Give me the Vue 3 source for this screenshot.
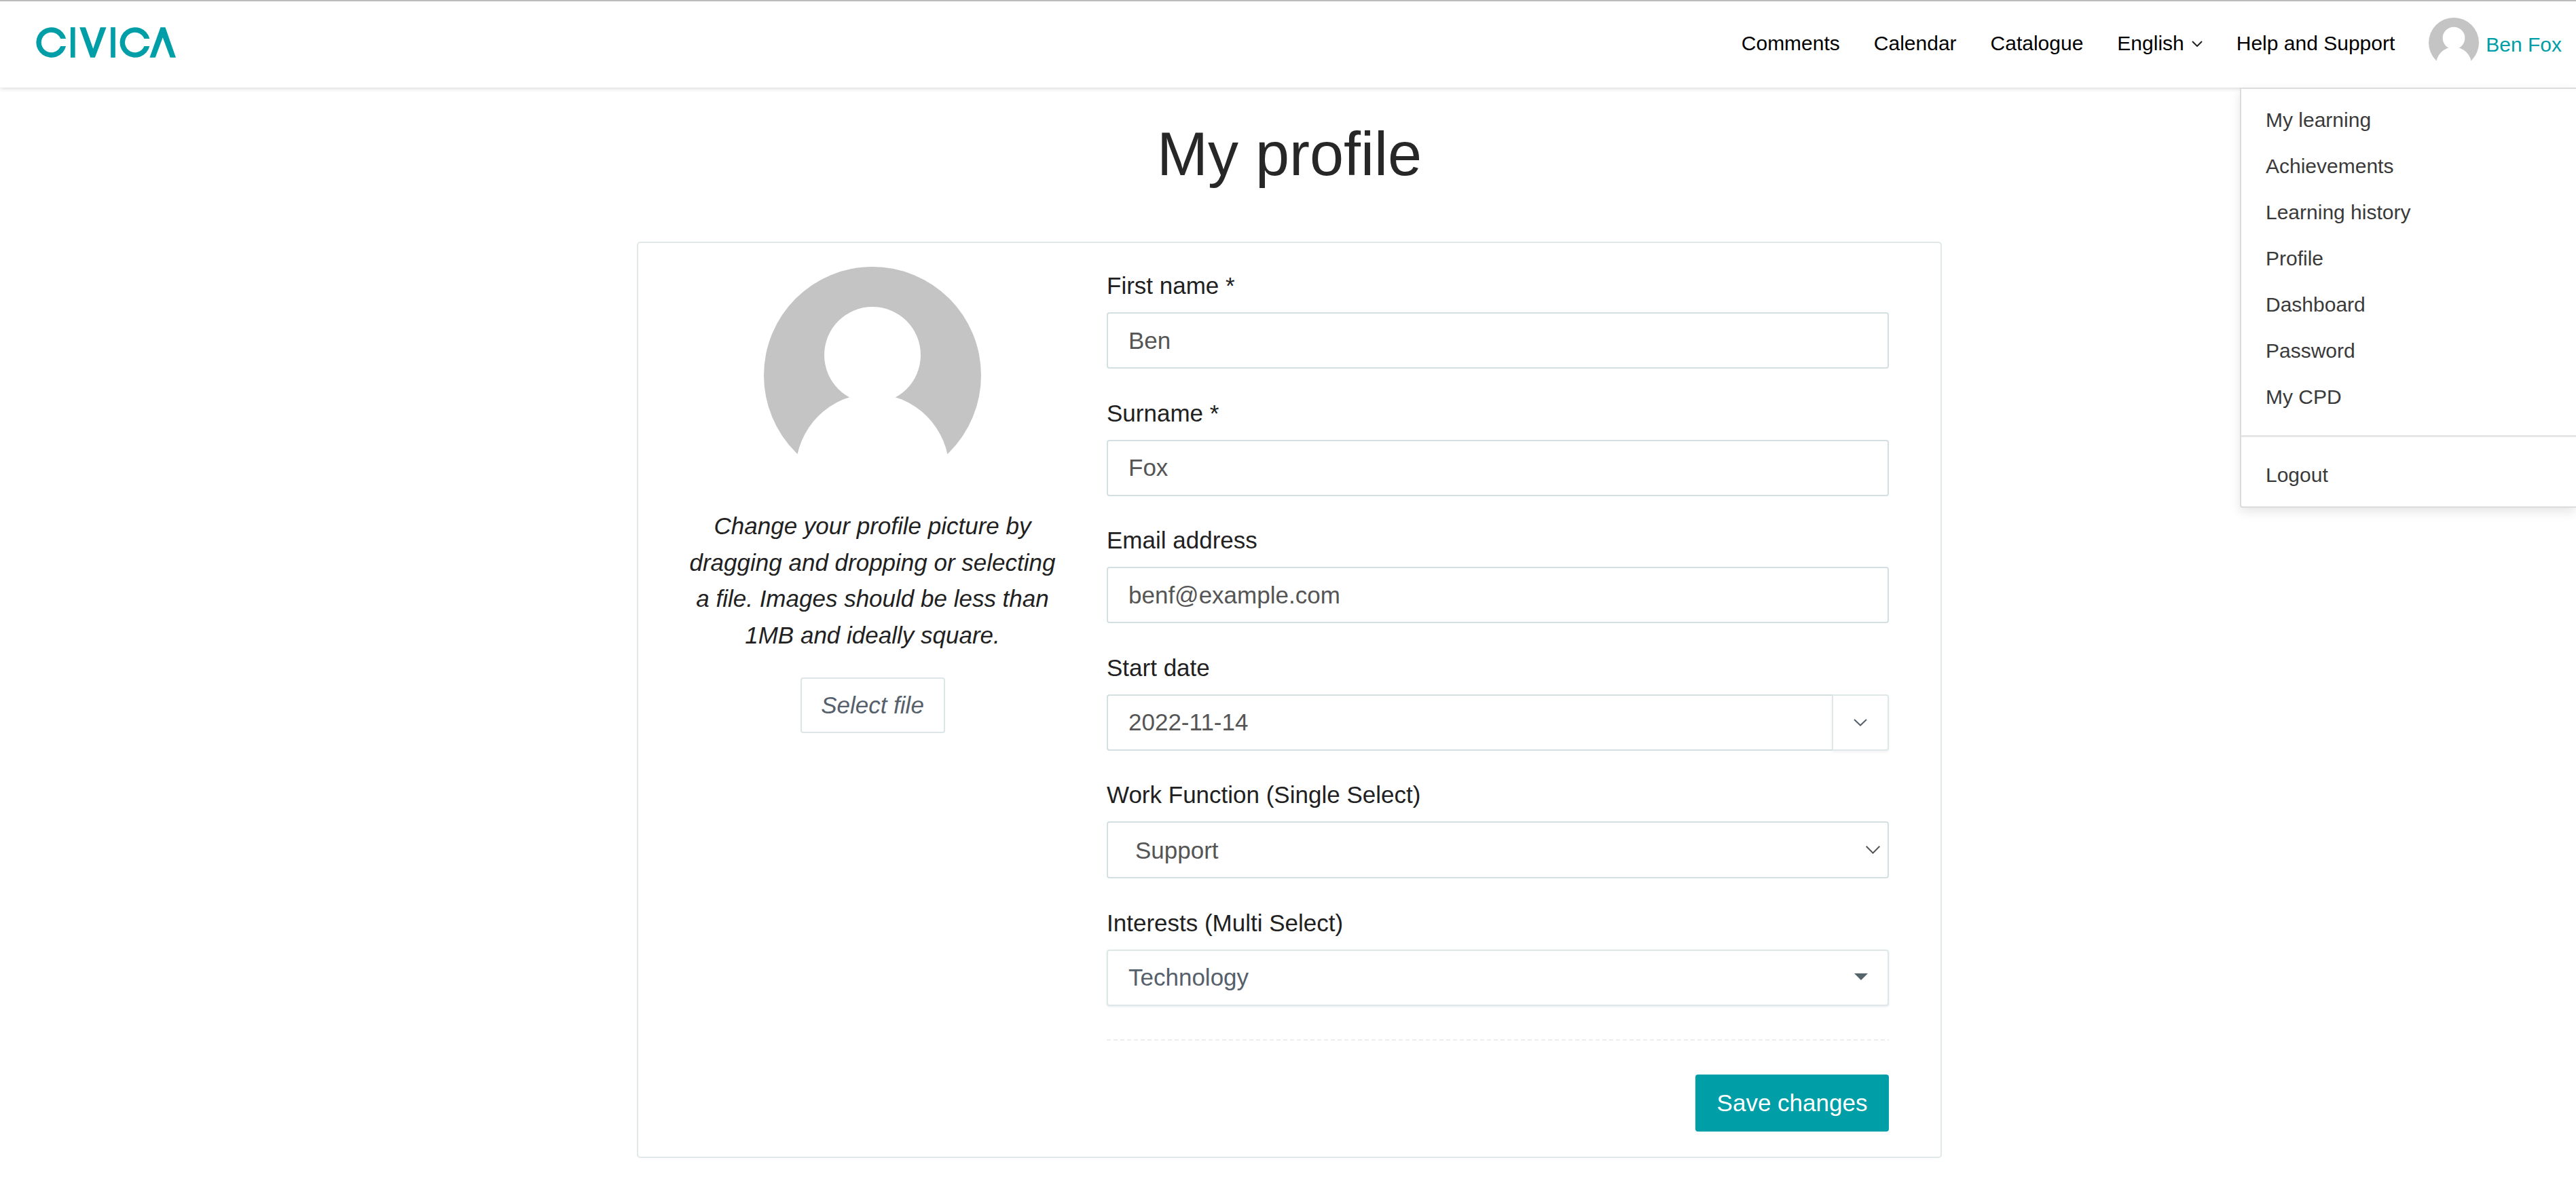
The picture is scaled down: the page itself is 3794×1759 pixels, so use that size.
<script setup>
import { ref } from 'vue'

const navLinks = ['Comments', 'Calendar', 'Catalogue']
const menuItems = ['My learning', 'Achievements', 'Learning history', 'Profile', 'Dashboard', 'Password', 'My CPD']
const firstName = ref('Ben')
const surname = ref('Fox')
const email = ref('benf@example.com')
const startDate = ref('2022-11-14')
const workFunction = ref('Support')
</script>

<template>
  <div class="page">
    <header class="topbar">
      <svg class="logo" viewBox="0 0 206.3 44.7" role="img" aria-label="Civica">
        <path d="M44.2 16.75A22.3 22.3 0 1 0 44.2 27.95H36.3A14.8 14.8 0 1 1 36.3 16.75Z" />
        <rect x="51" y="0" width="6.7" height="44.7" />
        <path d="M64.3 0H73L84.3 31.7L95 0H103.7L87 44.7H80.3Z" />
        <rect x="110.3" y="0" width="6.7" height="44.7" />
        <path d="M167.6 16.75A22.3 22.3 0 1 0 167.6 27.95H159.7A14.8 14.8 0 1 1 159.7 16.75Z" />
        <path d="M167.7 44.7H176L187 15L198 44.7H206.3L190.7 0H183.7Z" />
      </svg>
      <nav class="nav">
        <a v-for="link in navLinks" :key="link" class="nav-link">{{ link }}</a>
        <a class="nav-link lang">
          English
          <svg class="lang-chevron" viewBox="0 0 16 9"><path d="M1 1L8 8L15 1" /></svg>
        </a>
        <a class="nav-link">Help and Support</a>
        <a class="user">
          <svg class="avatar-small" viewBox="0 0 320 277">
            <circle cx="160" cy="160" r="160" fill="#c4c4c4" />
            <circle cx="160" cy="130" r="71" fill="#fff" />
            <circle cx="160" cy="300" r="113" fill="#fff" />
          </svg>
          <span class="user-name">Ben Fox</span>
        </a>
      </nav>
    </header>

    <ul class="user-menu">
      <li v-for="item in menuItems" :key="item" class="menu-item">{{ item }}</li>
      <li class="menu-divider"></li>
      <li class="menu-item">Logout</li>
    </ul>

    <main class="content">
      <h1 class="title">My profile</h1>
      <section class="card">
        <div class="picture-col">
          <svg class="avatar" viewBox="0 0 320 277">
            <circle cx="160" cy="160" r="160" fill="#c4c4c4" />
            <circle cx="160" cy="130" r="71" fill="#fff" />
            <circle cx="160" cy="300" r="113" fill="#fff" />
          </svg>
          <p class="picture-help">Change your profile picture by dragging and dropping or selecting a file. Images should be less than 1MB and ideally square.</p>
          <button class="file-btn" type="button">Select file</button>
        </div>

        <form class="form-col" @submit.prevent>
          <div class="field">
            <label class="label">First name *</label>
            <input v-model="firstName" class="control" type="text" />
          </div>
          <div class="field">
            <label class="label">Surname *</label>
            <input v-model="surname" class="control" type="text" />
          </div>
          <div class="field">
            <label class="label">Email address</label>
            <input v-model="email" class="control" type="text" />
          </div>
          <div class="field">
            <label class="label">Start date</label>
            <div class="date-group">
              <input v-model="startDate" class="control date-input" type="text" />
              <div class="date-addon">
                <svg class="date-chevron" viewBox="0 0 20 11"><path d="M1 1L10 9.5L19 1" /></svg>
              </div>
            </div>
          </div>
          <div class="field">
            <label class="label">Work Function (Single Select)</label>
            <div class="select-wrap">
              <select v-model="workFunction" class="control select">
                <option>Support</option>
              </select>
              <svg class="select-chevron" viewBox="0 0 21 12"><path d="M0.7 0.7L10.5 10.7L20.3 0.7" /></svg>
            </div>
          </div>
          <div class="field">
            <label class="label">Interests (Multi Select)</label>
            <div class="control multi">
              <span>Technology</span>
              <span class="multi-caret"></span>
            </div>
          </div>
          <div class="dash-rule"></div>
          <div class="actions">
            <button class="save-btn" type="submit">Save changes</button>
          </div>
        </form>
      </section>
    </main>
  </div>
</template>

<style>
html, body {
  margin: 0;
  background: #fff;
}
</style>

<style scoped>
.page {
  position: relative;
  min-height: 1759px;
  font-family: "Liberation Sans", Arial, sans-serif;
  color: #212121;
  background: #fff;
  overflow: hidden;
}

.topbar {
  display: flex;
  justify-content: space-between;
  align-items: flex-start;
  box-sizing: border-box;
  height: 129px;
  padding: 24px 21px 0 53px;
  border-top: 2px solid #bcbcbc;
  background: #fff;
  box-shadow: 0 2px 6px rgba(0, 0, 0, 0.14);
}

.logo {
  width: 206px;
  height: 45px;
  margin-top: 14px;
  fill: #009ea7;
}

.nav {
  display: flex;
  align-items: flex-start;
  gap: 50px;
}

.nav-link {
  margin-top: 18px;
  font-size: 30px;
  line-height: 40px;
  color: #000;
}

.lang {
  display: flex;
  align-items: center;
  gap: 11px;
}

.lang-chevron {
  width: 16px;
  height: 9px;
  fill: none;
  stroke: #222;
  stroke-width: 2;
}

.user {
  display: flex;
  align-items: flex-start;
  gap: 10px;
}

.avatar-small {
  display: block;
  width: 74px;
  height: 64px;
}

.user-name {
  margin-top: 20px;
  font-size: 30px;
  line-height: 40px;
  color: #009ea7;
}

.user-menu {
  position: absolute;
  top: 129px;
  right: 0;
  box-sizing: border-box;
  width: 495px;
  margin: 0;
  padding: 12px 0 12px;
  list-style: none;
  background: #fff;
  border: 2px solid #dcdcdc;
  border-right: 0;
  border-radius: 0 0 0 4px;
  box-shadow: 0 6px 16px rgba(0, 0, 0, 0.1);
  z-index: 2;
}

.menu-item {
  padding-left: 36px;
  font-size: 30px;
  line-height: 68px;
  color: #3a3a3a;
}

.menu-divider {
  height: 3px;
  margin: 22px 0 22px;
  background: #e6e6e6;
}

.content {
  display: flex;
  flex-direction: column;
  align-items: center;
  padding-left: 4px;
}

.title {
  margin: 44px 0 75px;
  font-size: 90px;
  font-weight: 400;
  line-height: 108px;
  color: #272727;
}

.card {
  display: grid;
  grid-template-columns: 690px 1fr;
  box-sizing: border-box;
  width: 1922px;
  height: 1350px;
  padding: 0 76px 0 0;
  border: 2px solid #e1e8e9;
  border-radius: 5px;
}

.picture-col {
  display: flex;
  flex-direction: column;
  align-items: center;
  padding-top: 35px;
}

.avatar {
  display: block;
  width: 320px;
  height: 277px;
  flex: none;
}

.picture-help {
  width: 556px;
  margin: 78px 0 36px;
  font-size: 35px;
  font-style: italic;
  line-height: 53.5px;
  text-align: center;
  color: #212121;
}

.file-btn {
  width: 213px;
  height: 82px;
  padding: 0;
  font-family: inherit;
  font-size: 35px;
  font-style: italic;
  color: #55606b;
  background: #fff;
  border: 2px solid #dde5e7;
  border-radius: 4px;
}

.form-col {
  display: flex;
  flex-direction: column;
  padding-top: 43px;
}

.field {
  margin-bottom: 45.5px;
}

.label {
  display: block;
  margin-bottom: 19px;
  font-size: 35px;
  line-height: 40px;
  color: #212121;
}

.control {
  display: block;
  box-sizing: border-box;
  width: 100%;
  height: 83px;
  margin: 0;
  padding: 0 30px;
  font-family: inherit;
  font-size: 35px;
  color: #555;
  background: #fff;
  border: 2px solid #d3dfe0;
  border-radius: 4px;
  outline: none;
}

.date-group {
  display: flex;
}

.date-input {
  flex: 1;
  border-right: 0;
  border-radius: 4px 0 0 4px;
}

.date-addon {
  display: flex;
  align-items: center;
  justify-content: center;
  flex: none;
  box-sizing: border-box;
  width: 84px;
  height: 83px;
  border: 2px solid #dfe7e8;
  border-radius: 0 4px 4px 0;
  box-shadow: 0 2px 4px rgba(0, 0, 0, 0.06);
}

.date-chevron {
  width: 20px;
  height: 11px;
  fill: none;
  stroke: #55606b;
  stroke-width: 2;
}

.select-wrap {
  position: relative;
}

.select {
  height: 84px;
  padding-left: 40px;
  appearance: none;
}

.select-chevron {
  position: absolute;
  top: 36px;
  right: 13px;
  width: 21px;
  height: 12px;
  fill: none;
  stroke: #555;
  stroke-width: 2;
}

.multi {
  display: flex;
  align-items: center;
  justify-content: space-between;
  color: #55606b;
  border-color: #dfe7e8;
  box-shadow: 0 1px 3px rgba(120, 140, 145, 0.2);
}

.multi-caret {
  width: 0;
  height: 0;
  margin-top: -2px;
  margin-right: -1px;
  border-left: 10px solid transparent;
  border-right: 10px solid transparent;
  border-top: 10px solid #55636b;
}

.dash-rule {
  flex: none;
  height: 2px;
  margin-top: 4px;
  background: repeating-linear-gradient(to right, #eeeeee 0 6px, transparent 6px 10px);
}

.actions {
  display: flex;
  justify-content: flex-end;
  padding-top: 50px;
}

.save-btn {
  width: 285px;
  height: 84px;
  padding: 0;
  font-family: inherit;
  font-size: 35px;
  color: #fff;
  background: #009ea7;
  border: 0;
  border-radius: 4px;
}
</style>
